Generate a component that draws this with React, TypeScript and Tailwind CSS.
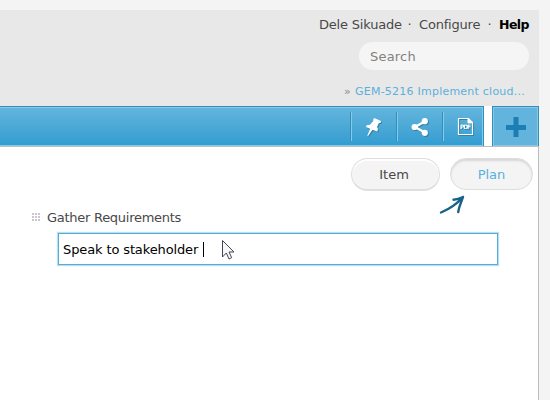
import React from "react";

const PinIcon = () => (
  <svg width="18" height="22" viewBox="0 0 18 22" className="overflow-visible drop-shadow-[1px_1px_0px_#3581a5]">
    <path fill="#fff" d="M9.2 2 L16 5 L15.5 7 L13.9 7 L12 11 L13 13 L12.3 15.5 L7.5 13.7 L3 20 L2.3 19.7 L5.2 12.8 L1 11 L1.6 9.3 L5 8.7 L8.3 5 L8.2 3.4 Z" />
  </svg>
);

const ShareIcon = () => (
  <svg width="18" height="20" viewBox="0 0 18 20" className="overflow-visible drop-shadow-[1px_1px_0px_#3581a5]">
    <path d="M13.8 4.5 L4 10 L13.8 15.5" fill="none" stroke="#fff" strokeWidth="2.4" />
    <circle cx="13.8" cy="4.2" r="3.1" fill="#fff" />
    <circle cx="3.6" cy="10" r="3.1" fill="#fff" />
    <circle cx="13.8" cy="15.8" r="3.1" fill="#fff" />
  </svg>
);

const PdfIcon = () => (
  <svg width="17" height="20" viewBox="0 0 17 20" className="overflow-visible drop-shadow-[1px_1px_0px_#3581a5]">
    <path d="M1.5 1.5 H11.5 L15.5 5.5 V17.5 H1.5 Z" fill="none" stroke="#fff" strokeWidth="1.2" />
    <path d="M11 1.5 V6 H15.5" fill="#fff" stroke="#fff" />
    <text x="8.5" y="11.6" textAnchor="middle" textLength="11" fill="#fff" fontSize="6" fontWeight="bold" fontFamily="DejaVu Sans, sans-serif">PDF</text>
  </svg>
);

const Tool = ({ children }: { children: React.ReactNode }) => (
  <div className="flex h-full w-[46px] items-center">
    <div className="h-[29px] w-px bg-[#318db9]" />
    <div className="h-[29px] w-px bg-[#86cbe9]" />
    <div className="flex flex-1 justify-center pr-px">{children}</div>
  </div>
);

export default function App() {
  return (
    <div className="relative h-[400px] w-[550px] overflow-hidden bg-[#f4f4f4] pt-[10px] font-['DejaVu_Sans',Verdana,sans-serif] text-[13px] text-[#484848]">
      <div className="flex h-[390px] w-[539px] flex-col">
        <header className="flex h-24 flex-col items-end bg-[#e8e8e8] pr-[10px]">
          <div className="mt-[7px] flex h-4 items-center whitespace-nowrap leading-4">
            <span className="w-[83px] tracking-[-0.2px]">Dele Sikuade</span>
            <span className="w-[17px] pr-[2px] text-center">·</span>
            <span className="w-[62px] tracking-[-0.2px]">Configure</span>
            <span className="w-[18px] pr-px text-center">·</span>
            <span className="w-[30px] text-[12.5px] font-bold tracking-[-0.55px] text-black">Help</span>
          </div>
          <div className="mt-[9px] flex h-7 w-[170px] items-center rounded-full bg-[#f5f5f5] pl-[11px] pt-px leading-4 tracking-[0.2px] text-[#828282]">Search</div>
          <div className="mt-[15px] flex h-[14px] items-center whitespace-nowrap pr-1 text-[11px] leading-[14px]">
            <span className="w-[11px] text-[#888]">»</span>
            <span className="w-[170px] tracking-[0.23px] text-[#5bb0da]">GEM-5216 Implement cloud...</span>
          </div>
        </header>

        <nav className="flex h-[41px] shrink-0 border-b border-[#bbbdbf] bg-white">
          <div className="h-10 w-[484px] border-r border-t border-[#318db9]">
            <div className="flex h-[39px] justify-end border-y border-r border-[#87c9e7] bg-linear-to-b from-[#62b5dc] to-[#329dd1]">
              <div className="-mr-[6px] flex">
                <Tool><PinIcon /></Tool>
                <Tool><ShareIcon /></Tool>
                <Tool><PdfIcon /></Tool>
              </div>
            </div>
          </div>
          <div className="ml-2 h-10 w-[47px] border-x border-t border-[#318db9]">
            <div className="flex h-[39px] items-center justify-center border border-[#87c9e7] bg-[#62b4dc] pl-px pt-px">
              <svg width="20" height="20" viewBox="0 0 20 20">
                <path d="M7.5 0h5v8H20v5h-7.5v7h-5v-7H0V8h7.5z" fill="#1b7fb5" />
              </svg>
            </div>
          </div>
        </nav>

        <main className="flex-1 border-r border-[#bdbdbd] bg-white">
          <div className="flex justify-end gap-[10px] pr-[5px] pt-[11px]">
            <button className="h-[33px] w-[89px] rounded-full border border-b-2 border-[#dfdfdf] bg-[#f4f4f4] pr-[3px] pt-px leading-[30px] shadow-[inset_0_2px_1px_white]">Item</button>
            <button className="h-8 w-[83px] rounded-full border border-[#dddddd] bg-[#f4f4f4] leading-[31px] text-[#58b1dc] shadow-[inset_0_2px_2px_#d8d8d8]">Plan</button>
          </div>
          <div className="mt-[18px] flex h-4 items-center pl-8">
            <div className="grid w-2 grid-cols-3 gap-px">
              {Array.from({ length: 9 }, (_, i) => <i key={i} className="size-[2px] bg-[#cac6cb]" />)}
            </div>
            <span className="ml-[7px] pt-[2px] leading-4 tracking-[-0.27px]">Gather Requirements</span>
          </div>
          <div className="ml-[58px] mt-2 flex h-8 w-[440px] items-center border border-[#55add7] bg-white pl-1 text-black shadow-[0_0_1px_1px_#b9e0f2]">
            <span className="w-[140px] whitespace-nowrap pt-[2px] tracking-[-0.12px]">Speak to stakeholder</span>
            <span className="h-[15px] w-px bg-black" />
          </div>
        </main>
      </div>

      <svg className="absolute left-[438px] top-[194px]" width="28" height="22" viewBox="0 0 28 22">
        <path d="M3 18.5 C9 16 18 11 25 3 M15.5 5.7 C19 5.5 22 4.5 25 3 C23.5 8 21 12 20.2 18" fill="none" stroke="#186289" strokeWidth="2.4" strokeLinecap="round" strokeLinejoin="round" />
      </svg>
      <svg className="absolute left-[221px] top-[239px]" width="15" height="22" viewBox="0 0 15 22">
        <path d="M1.5 1.5 V18 L5.3 14 L8 20 L10.7 18.7 L8 13 H13 Z" fill="#f7f7fa" stroke="#454454" />
      </svg>
    </div>
  );
}
